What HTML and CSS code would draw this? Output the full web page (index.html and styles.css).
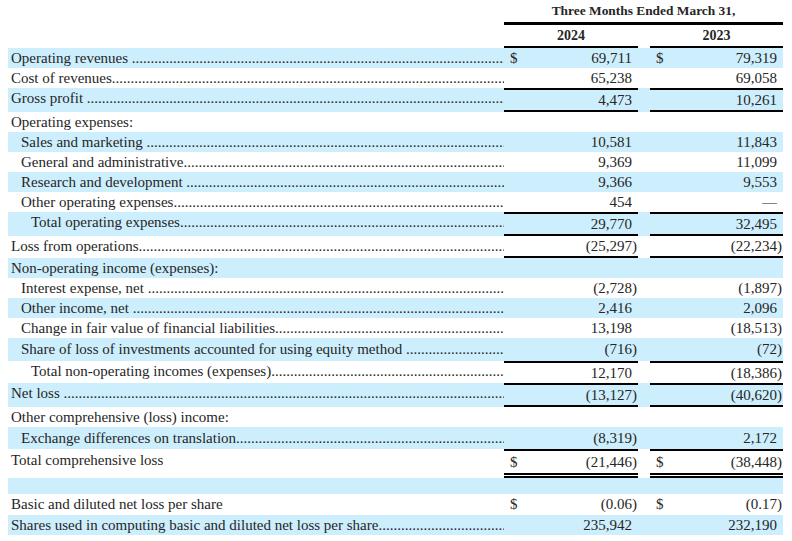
FILE: index.html
```html
<!DOCTYPE html>
<html>
<head>
<meta charset="utf-8">
<link rel="stylesheet" href="styles.css">
</head>
<body>
<div class="sheet">
  <div class="row head1">
    <div class="lbl"></div>
    <div class="span-all">Three Months Ended March 31,</div>
  </div>
  <div class="row head2">
    <div class="lbl"></div>
    <div class="yr1">2024</div>
    <div class="gap"></div>
    <div class="yr2">2023</div>
  </div>

  <div class="row blue">
    <div class="lbl lead"><span>Operating revenues&nbsp;</span><i></i></div>
    <div class="cur">$</div><div class="num">69,711<b>)</b></div><div class="gap"></div>
    <div class="cur">$</div><div class="num">79,319<b>)</b></div>
  </div>
  <div class="row">
    <div class="lbl lead"><span>Cost of revenues</span><i></i></div>
    <div class="cur"></div><div class="num">65,238<b>)</b></div><div class="gap"></div>
    <div class="cur"></div><div class="num">69,058<b>)</b></div>
  </div>
  <div class="row blue tl bl">
    <div class="lbl lead"><span>Gross profit&nbsp;</span><i></i></div>
    <div class="cur"></div><div class="num">4,473<b>)</b></div><div class="gap"></div>
    <div class="cur"></div><div class="num">10,261<b>)</b></div>
  </div>
  <div class="row">
    <div class="lbl"><span>Operating expenses:</span></div>
    <div class="cur"></div><div class="num"></div><div class="gap"></div>
    <div class="cur"></div><div class="num"></div>
  </div>
  <div class="row blue">
    <div class="lbl lead ind1"><span>Sales and marketing&nbsp;</span><i></i></div>
    <div class="cur"></div><div class="num">10,581<b>)</b></div><div class="gap"></div>
    <div class="cur"></div><div class="num">11,843<b>)</b></div>
  </div>
  <div class="row">
    <div class="lbl lead ind1"><span>General and administrative</span><i></i></div>
    <div class="cur"></div><div class="num">9,369<b>)</b></div><div class="gap"></div>
    <div class="cur"></div><div class="num">11,099<b>)</b></div>
  </div>
  <div class="row blue">
    <div class="lbl lead ind1"><span>Research and development&nbsp;</span><i></i></div>
    <div class="cur"></div><div class="num">9,366<b>)</b></div><div class="gap"></div>
    <div class="cur"></div><div class="num">9,553<b>)</b></div>
  </div>
  <div class="row">
    <div class="lbl lead ind1"><span>Other operating expenses</span><i></i></div>
    <div class="cur"></div><div class="num">454<b>)</b></div><div class="gap"></div>
    <div class="cur"></div><div class="num">—<b>)</b></div>
  </div>
  <div class="row blue tl bl">
    <div class="lbl lead ind2"><span>Total operating expenses</span><i></i></div>
    <div class="cur"></div><div class="num">29,770<b>)</b></div><div class="gap"></div>
    <div class="cur"></div><div class="num">32,495<b>)</b></div>
  </div>
  <div class="row bl">
    <div class="lbl lead"><span>Loss from operations</span><i></i></div>
    <div class="cur"></div><div class="num">(25,297)</div><div class="gap"></div>
    <div class="cur"></div><div class="num">(22,234)</div>
  </div>
  <div class="row blue">
    <div class="lbl"><span>Non-operating income (expenses):</span></div>
    <div class="cur"></div><div class="num"></div><div class="gap"></div>
    <div class="cur"></div><div class="num"></div>
  </div>
  <div class="row">
    <div class="lbl lead ind1"><span>Interest expense, net&nbsp;</span><i></i></div>
    <div class="cur"></div><div class="num">(2,728)</div><div class="gap"></div>
    <div class="cur"></div><div class="num">(1,897)</div>
  </div>
  <div class="row blue">
    <div class="lbl lead ind1"><span>Other income, net&nbsp;</span><i></i></div>
    <div class="cur"></div><div class="num">2,416<b>)</b></div><div class="gap"></div>
    <div class="cur"></div><div class="num">2,096<b>)</b></div>
  </div>
  <div class="row">
    <div class="lbl lead ind1"><span>Change in fair value of financial liabilities</span><i></i></div>
    <div class="cur"></div><div class="num">13,198<b>)</b></div><div class="gap"></div>
    <div class="cur"></div><div class="num">(18,513)</div>
  </div>
  <div class="row blue tall">
    <div class="lbl lead ind1"><span>Share of loss of investments accounted for using equity method&nbsp;</span><i></i></div>
    <div class="cur"></div><div class="num">(716)</div><div class="gap"></div>
    <div class="cur"></div><div class="num">(72)</div>
  </div>
  <div class="row tl">
    <div class="lbl lead ind2"><span>Total non-operating incomes (expenses)</span><i></i></div>
    <div class="cur"></div><div class="num">12,170<b>)</b></div><div class="gap"></div>
    <div class="cur"></div><div class="num">(18,386)</div>
  </div>
  <div class="row blue tl bl">
    <div class="lbl lead"><span>Net loss&nbsp;</span><i></i></div>
    <div class="cur"></div><div class="num">(13,127)</div><div class="gap"></div>
    <div class="cur"></div><div class="num">(40,620)</div>
  </div>
  <div class="row">
    <div class="lbl"><span>Other comprehensive (loss) income:</span></div>
    <div class="cur"></div><div class="num"></div><div class="gap"></div>
    <div class="cur"></div><div class="num"></div>
  </div>
  <div class="row blue tall2">
    <div class="lbl lead ind1"><span>Exchange differences on translation</span><i></i></div>
    <div class="cur"></div><div class="num">(8,319)</div><div class="gap"></div>
    <div class="cur"></div><div class="num">2,172<b>)</b></div>
  </div>
  <div class="row tl dbl tall2">
    <div class="lbl"><span>Total comprehensive loss</span></div>
    <div class="cur">$</div><div class="num">(21,446)</div><div class="gap"></div>
    <div class="cur">$</div><div class="num">(38,448)</div>
  </div>
  <div class="row blue blank">
    <div class="lbl"></div>
  </div>
  <div class="row tall1">
    <div class="lbl"><span>Basic and diluted net loss per share</span></div>
    <div class="cur">$</div><div class="num">(0.06)</div><div class="gap"></div>
    <div class="cur">$</div><div class="num">(0.17)</div>
  </div>
  <div class="row blue">
    <div class="lbl lead"><span>Shares used in computing basic and diluted net loss per share</span><i></i></div>
    <div class="cur"></div><div class="num">235,942<b>)</b></div><div class="gap"></div>
    <div class="cur"></div><div class="num">232,190<b>)</b></div>
  </div>
</div>
</body>
</html>
```

FILE: styles.css
```css
html, body {
  margin: 0;
  padding: 0;
  background: #ffffff;
}

body {
  font-family: "Liberation Serif", "Times New Roman", serif;
  font-size: 15px;
  color: #262626;
}

.sheet {
  margin-left: 8px;
  width: 775px;
}

.row {
  display: grid;
  grid-template-columns: 496px 26px 108px 12px 26px 107px;
  line-height: 20px;
  min-height: 20px;
}

.blue {
  background: #cdeefd;
}

.lbl {
  padding-left: 3px;
  display: flex;
  white-space: nowrap;
  overflow: hidden;
}

.lbl.ind1 { padding-left: 13px; }
.lbl.ind2 { padding-left: 23px; }

.lead i {
  flex: 1;
  overflow: hidden;
  font-style: normal;
}

.lead i::after {
  content: "............................................................................................................................................................................................................................";
}

.cur {
  padding-left: 6px;
}

.num {
  text-align: right;
  padding-right: 1px;
  white-space: nowrap;
}

.num b {
  font-weight: normal;
  visibility: hidden;
}

/* header */
.head1 {
  line-height: 22px;
  font-weight: bold;
  font-size: 13.4px;
}

.head1 .span-all {
  grid-column: 2 / 7;
  text-align: center;
  border-bottom: 3px solid #000;
}

.head2 {
  font-weight: bold;
  font-size: 14px;
  line-height: 21px;
}

.head2 .yr1 {
  grid-column: 2 / 4;
  text-align: center;
  border-bottom: 2px solid #000;
}

.head2 .yr2 {
  grid-column: 5 / 7;
  text-align: center;
  border-bottom: 2px solid #000;
}

.tl .cur, .tl .num { border-top: 2px solid #000; }
.bl .cur, .bl .num { border-bottom: 2px solid #000; }
.dbl .cur, .dbl .num { border-bottom: 5px double #000; }

.tall { min-height: 23px; line-height: 23px; }
.tall1 { min-height: 21px; line-height: 21px; }
.tall2 { min-height: 22px; line-height: 22px; }
.blank { min-height: 16px; }
```
